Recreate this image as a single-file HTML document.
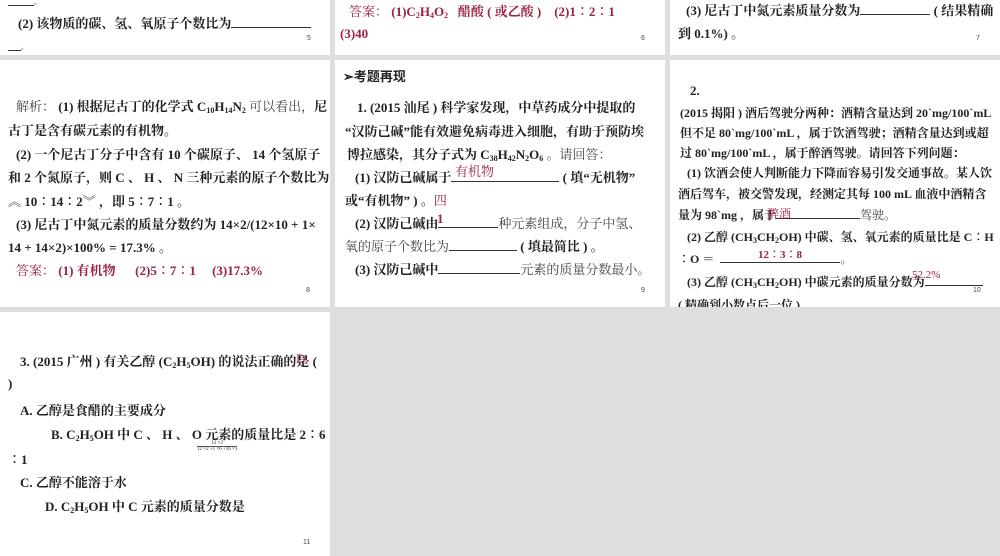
<!DOCTYPE html>
<html><head><meta charset="utf-8"><style>
body{margin:0;width:1000px;height:556px;background:#dedede;position:relative;overflow:hidden;font-family:"Liberation Serif","Noto Serif CJK SC","Noto Sans CJK SC",serif;font-weight:bold;font-size:13px;color:#222}
.p{position:absolute;background:#fff;overflow:hidden}
.l{position:absolute;white-space:nowrap}
.r{color:#9b2240}
.n{position:absolute;font-family:"Liberation Sans",sans-serif;font-weight:normal;font-size:7px;color:#444}
.u{display:inline-block;border-bottom:1px solid #333;height:12px;vertical-align:baseline}
sub{font-size:8px;vertical-align:-2px}
.g{font-weight:normal;color:#444}
.s{font-size:12px}
</style></head><body>
<div class="p" style="left:0;top:0;width:330px;height:55px">
<div class="l" style="left:8px;top:-8px">____<span style="font-size:7px">。</span></div>
<div class="l" style="left:18px;top:13px">(2) 该物质的碳、氢、氧原子个数比为<span class="u" style="width:80px"></span></div>
<div class="l" style="left:8px;top:37px">__<span style="font-size:7px">。</span></div>
<div class="n" style="left:307px;top:35px">5</div>
</div>
<div class="p" style="left:335px;top:0;width:330px;height:55px">
<div class="l r" style="left:14px;top:1px"><span class="g" style="color:#9b2240">答案：</span> (1)C<sub>2</sub>H<sub>4</sub>O<sub>2</sub> &nbsp; 醋酸 ( 或乙酸 ) &nbsp;&nbsp; (2)1∶2∶1</div>
<div class="l r" style="left:5px;top:26px">(3)40</div>
<div class="n" style="left:306px;top:35px">6</div>
</div>
<div class="p" style="left:670px;top:0;width:330px;height:55px">
<div class="l" style="left:16px;top:0px">(3) 尼古丁中氮元素质量分数为<span class="u" style="width:70px"></span> ( 结果精确</div>
<div class="l" style="left:8px;top:23px">到 0.1%) 。</div>
<div class="n" style="left:306px;top:35px">7</div>
</div>

<div class="p" style="left:0;top:60px;width:330px;height:247px">
<div class="l" style="left:16px;top:36px"><span class="g">解析：</span> (1) 根据尼古丁的化学式 C<sub>10</sub>H<sub>14</sub>N<sub>2</sub> <span class="g">可以看出，</span>尼</div>
<div class="l" style="left:8px;top:60px">古丁是含有碳元素的有机物。</div>
<div class="l" style="left:16px;top:84px">(2) 一个尼古丁分子中含有 10 个碳原子、 14 个氢原子</div>
<div class="l" style="left:8px;top:107px">和 2 个氮原子，则 C 、 H 、 N 三种元素的原子个数比为</div>
<div class="l" style="left:8px;top:131px">︽ 10∶14∶2︾ ，即 5∶7∶1 。</div>
<div class="l" style="left:16px;top:154px">(3) 尼古丁中氮元素的质量分数约为 14×2/(12×10 + 1×</div>
<div class="l" style="left:8px;top:177px">14 + 14×2)×100% = 17.3% 。</div>
<div class="l r" style="left:16px;top:200px"><span style="font-weight:normal">答案：</span> (1) 有机物 &nbsp;&nbsp;&nbsp;&nbsp; (2)5∶7∶1 &nbsp;&nbsp;&nbsp; (3)17.3%</div>
<div class="n" style="left:306px;top:227px">8</div>
</div>

<div class="p" style="left:335px;top:60px;width:330px;height:247px">
<div class="l" style="left:8px;top:6px;font-family:'Liberation Sans','Noto Sans CJK SC',sans-serif">➢考题再现</div>
<div class="l" style="left:22px;top:37px">1. (2015 汕尾 ) 科学家发现，中草药成分中提取的</div>
<div class="l" style="left:10px;top:61px">“汉防己碱”能有效避免病毒进入细胞，有助于预防埃</div>
<div class="l" style="left:12px;top:84px">博拉感染，其分子式为 C<sub>38</sub>H<sub>42</sub>N<sub>2</sub>O<sub>6</sub> <span class="g">。请回答：</span></div>
<div class="l" style="left:20px;top:107px">(1) 汉防己碱属于<span class="u" style="width:108px"></span> ( 填“无机物”</div>
<div class="l r" style="left:120px;top:101px;font-weight:normal">有机物</div>
<div class="l" style="left:10px;top:130px">或“有机物” ) 。<span class="r g" style="color:#9b2240">四</span></div>
<div class="l" style="left:20px;top:153px">(2) 汉防己碱由<span class="u" style="width:60px"></span><span class="g">种元素组成，分子中氢、</span></div>
<div class="l r" style="left:102px;top:151px">1</div>
<div class="l g" style="left:10px;top:176px">氧的原子个数比为<span class="u" style="width:68px"></span> <b style="color:#222">( 填最简比 ) 。</b></div>
<div class="l" style="left:20px;top:199px">(3) 汉防己碱中<span class="u" style="width:82px"></span><span class="g">元素的质量分数最小。</span></div>
<div class="n" style="left:306px;top:227px">9</div>
</div>

<div class="p" style="left:670px;top:60px;width:330px;height:247px">
<div class="l" style="left:20px;top:23px">2.</div>
<div class="l s" style="left:10px;top:44px">(2015 揭阳 ) 酒后驾驶分两种：酒精含量达到 20`mg/100`mL</div>
<div class="l s" style="left:10px;top:64px">但不足 80`mg/100`mL ，属于饮酒驾驶；酒精含量达到或超</div>
<div class="l s" style="left:10px;top:84px">过 80`mg/100`mL ，属于醉酒驾驶。请回答下列问题：</div>
<div class="l s" style="left:17px;top:104px">(1) 饮酒会使人判断能力下降而容易引发交通事故。某人饮</div>
<div class="l s" style="left:8px;top:125px">酒后驾车，被交警发现，经测定其每 100 mL 血液中酒精含</div>
<div class="l s" style="left:8px;top:146px">量为 98`mg ，属于<span class="u" style="width:84px"></span><span class="g">驾驶。</span></div>
<div class="l r g s" style="left:97px;top:145px;color:#9b2240">醉酒</div>
<div class="l s" style="left:17px;top:168px">(2) 乙醇 (CH<sub>3</sub>CH<sub>2</sub>OH) 中碳、氢、氧元素的质量比是 C∶H</div>
<div class="l s" style="left:8px;top:190px">∶O ＝ &nbsp;<span class="u" style="width:120px"></span><span class="g">。</span></div>
<div class="l r" style="left:88px;top:186px;font-size:11px">12∶3∶8</div>
<div class="l s" style="left:17px;top:213px">(3) 乙醇 (CH<sub>3</sub>CH<sub>2</sub>OH) 中碳元素的质量分数为<span class="u" style="width:58px"></span></div>
<div class="l r" style="left:242px;top:209px;font-size:11px;font-weight:normal">52.2%</div>
<div class="l s" style="left:8px;top:236px">( 精确到小数点后一位 )</div>
<div class="n" style="left:303px;top:227px">10</div>
</div>

<div class="p" style="left:0;top:312px;width:330px;height:244px">
<div class="l" style="left:20px;top:39px">3. (2015 广州 ) 有关乙醇 (C<sub>2</sub>H<sub>5</sub>OH) 的说法正确的是 (</div>
<div class="l r" style="left:296px;top:39px;font-weight:normal">D</div>
<div class="l" style="left:8px;top:64px">)</div>
<div class="l" style="left:20px;top:88px">A. 乙醇是食醋的主要成分</div>
<div class="l" style="left:51px;top:112px">B. C<sub>2</sub>H<sub>5</sub>OH 中 C 、 H 、 O 元素的质量比是 2∶6</div>
<div class="l" style="left:197px;top:129px;font-size:5px;font-weight:normal;text-align:center"><div style="border-bottom:1px solid #555">12 ×2</div>12 ×2 +1 ×6 +16 ×1</div>
<div class="l" style="left:8px;top:137px">∶1</div>
<div class="l" style="left:20px;top:160px">C. 乙醇不能溶于水</div>
<div class="l" style="left:45px;top:184px">D. C<sub>2</sub>H<sub>5</sub>OH 中 C 元素的质量分数是</div>
<div class="n" style="left:303px;top:227px">11</div>
</div>
</body></html>
